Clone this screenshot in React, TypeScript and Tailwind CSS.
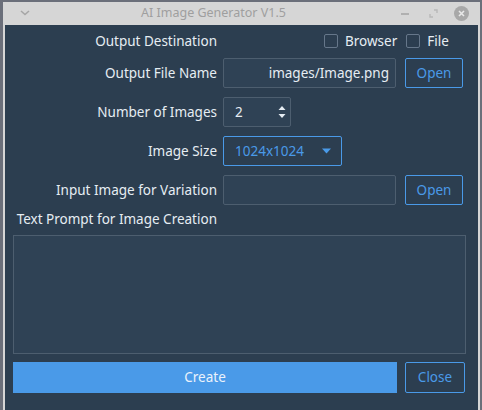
import React from 'react';

const font = { fontFamily: '"Noto Sans", "Open Sans", sans-serif' };

const Label = ({ children }: { children: React.ReactNode }) => (
  <div className="w-[206px] shrink-0 whitespace-nowrap text-right text-[13.5px] text-[#e6edf3]">{children}</div>
);

const OpenBtn = () => (
  <button className="ml-[9px] h-[30px] w-[58px] rounded-[2px] border border-[#4a9ae8] text-[13.5px] text-[#4a9ae8]">
    Open
  </button>
);

const Checkbox = ({ label }: { label: string }) => (
  <div className="flex items-center gap-[7px]">
    <div className="h-[14px] w-[14px] rounded-[2px] border border-[#66778a]" />
    <span className="text-[13.5px] text-[#e6edf3]">{label}</span>
  </div>
);

export default function App() {
  return (
    <div className="relative h-[410px] w-[482px] overflow-hidden bg-[#6b6f7a]" style={font}>
      <div className="absolute left-[3px] top-[2px] flex h-[420px] w-[477px] flex-col bg-[#d6d6d6]">
        {/* title bar */}
        <div className="relative flex h-[23px] shrink-0 items-center justify-center text-[12.5px] text-[#9f9f9f]">
          <svg className="absolute left-[16px] top-[7px]" width="12" height="8" viewBox="0 0 12 8">
            <path d="M2 2 L6 5.5 L10 2" stroke="#a6a6a6" strokeWidth="1.6" fill="none" />
          </svg>
          <span className="ml-[-56px]">AI Image Generator V1.5</span>
          <div className="absolute left-[398px] top-[11px] h-[1.5px] w-[8px] bg-[#b0b0b0]" />
          <svg className="absolute left-[426px] top-[7px]" width="9" height="9" viewBox="0 0 9 9">
            <path d="M5 1 H8 V4 M4 8 H1 V5" stroke="#b8b8b8" strokeWidth="1.4" fill="none" />
          </svg>
          <div className="absolute left-[451px] top-[4px] flex h-[15px] w-[15px] items-center justify-center rounded-full bg-[#a8a8a8]">
            <svg width="7" height="7" viewBox="0 0 7 7">
              <path d="M1 1 L6 6 M6 1 L1 6" stroke="#e8e8e8" strokeWidth="1.6" />
            </svg>
          </div>
        </div>
        {/* content */}
        <div className="mx-[2px] flex flex-1 flex-col bg-[#2c3e50] pl-[6px] pr-[12px] pt-[6px]">
          <div className="flex h-[20px] items-center">
            <Label>Output Destination</Label>
            <div className="ml-[107px] flex items-center gap-[9px]">
              <Checkbox label="Browser" />
              <Checkbox label="File" />
            </div>
          </div>
          <div className="mt-[7px] flex items-center">
            <Label>Output File Name</Label>
            <div className="ml-[6px] flex h-[30px] w-[173px] items-center justify-end rounded-[2px] border border-[#4d5e6f] bg-[#2f4255] pr-[6px] text-[13.5px] text-[#e6edf3]">
              images/Image.png
            </div>
            <OpenBtn />
          </div>
          <div className="mt-[9px] flex items-center">
            <Label>Number of Images</Label>
            <div className="ml-[6px] flex h-[30px] w-[68px] items-center justify-between rounded-[2px] border border-[#4d5e6f] bg-[#2f4255] pl-[11px] pr-[4px] text-[13.5px] text-[#e6edf3]">
              <span>2</span>
              <svg width="8" height="14" viewBox="0 0 8 14">
                <path d="M0.5 5 L4 1 L7.5 5 Z M0.5 9 L4 13 L7.5 9 Z" fill="#e6edf3" />
              </svg>
            </div>
          </div>
          <div className="mt-[9px] flex items-center">
            <Label>Image Size</Label>
            <div className="ml-[6px] flex h-[30px] w-[119px] items-center justify-between rounded-[2px] border border-[#4a9ae8] pl-[11px] pr-[10px] text-[13.5px] text-[#4a9ae8]">
              <span>1024x1024</span>
              <svg width="9" height="6" viewBox="0 0 9 6">
                <path d="M0 0.5 H9 L4.5 5.5 Z" fill="#4a9ae8" />
              </svg>
            </div>
          </div>
          <div className="mt-[9px] flex items-center">
            <Label>Input Image for Variation</Label>
            <div className="ml-[6px] h-[30px] w-[173px] rounded-[2px] border border-[#4d5e6f] bg-[#2f4255]" />
            <OpenBtn />
          </div>
          <div className="mt-[4px] flex h-[20px] items-center">
            <Label>Text Prompt for Image Creation</Label>
          </div>
          <div className="ml-[2px] mt-[6px] h-[119px] w-[453px] border border-[#4d5e6f] bg-[#2f4255]" />
          <div className="ml-[2px] mt-[8px] flex items-center">
            <button className="h-[31px] w-[384px] bg-[#4a9ae8] text-[13.5px] text-[#eaf2fb]">Create</button>
            <button className="ml-[8px] h-[31px] w-[60px] rounded-[2px] border border-[#4a9ae8] text-[13.5px] text-[#4a9ae8]">
              Close
            </button>
          </div>
        </div>
      </div>
    </div>
  );
}
